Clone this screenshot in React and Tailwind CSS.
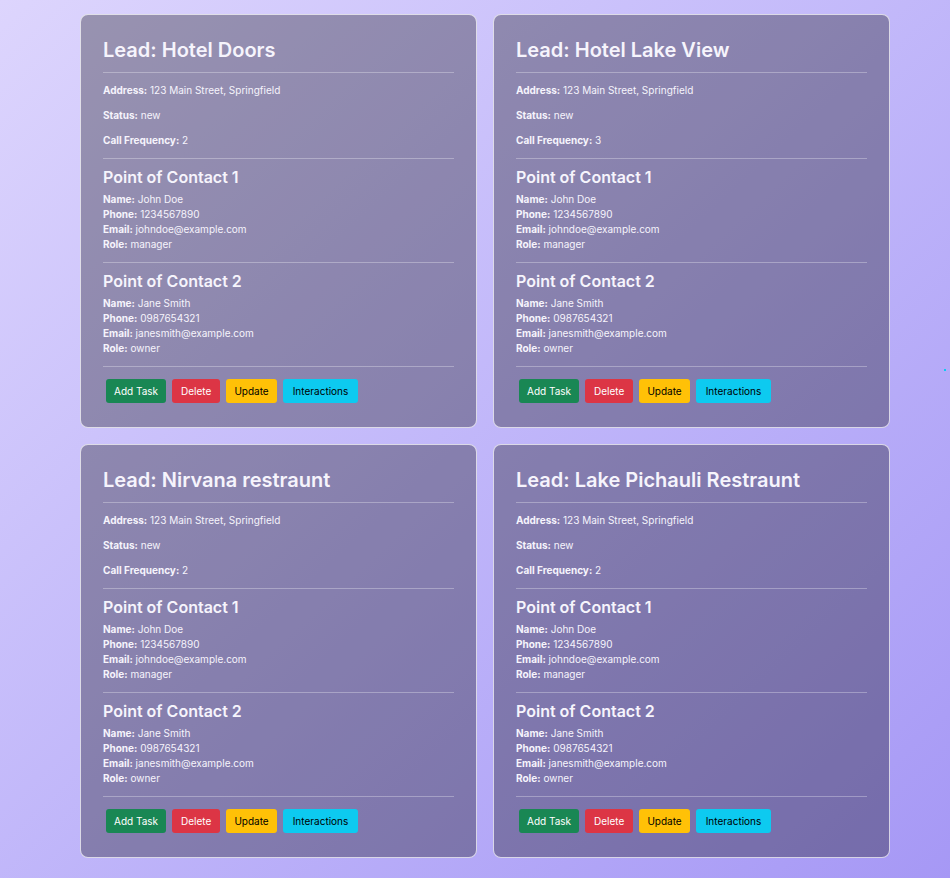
import React from "react";

const leads = [
  { name: "Hotel Doors", freq: 2 },
  { name: "Hotel Lake View", freq: 3 },
  { name: "Nirvana restraunt", freq: 2 },
  { name: "Lake Pichauli Restraunt", freq: 2 },
];

const contacts = [
  { name: "John Doe", phone: "1234567890", email: "johndoe@example.com", role: "manager" },
  { name: "Jane Smith", phone: "0987654321", email: "janesmith@example.com", role: "owner" },
];

const Field = ({ label, value, className = "" }) => (
  <p className={`text-[10px] leading-[15px] ${className}`}>
    <span className="font-bold">{label}:</span> {value}
  </p>
);

const LeadCard = ({ lead }) => (
  <div className="rounded-lg border border-white/70 bg-black/30 px-[22px] pt-[21px] pb-[24px] text-[#f6f4fc]">
    <h2 className="text-xl font-semibold leading-7">Lead: {lead.name}</h2>
    <hr className="mt-2 border-white/30" />
    <div className="pt-[10px]">
      <Field label="Address" value="123 Main Street, Springfield" className="mb-[10px]" />
      <Field label="Status" value="new" className="mb-[10px]" />
      <Field label="Call Frequency" value={lead.freq} className="mb-[10px]" />
    </div>
    {contacts.map((c, i) => (
      <div key={i}>
        <hr className="border-white/30" />
        <h3 className="mt-[6px] mb-[3px] text-base font-semibold leading-6">Point of Contact {i + 1}</h3>
        <Field label="Name" value={c.name} />
        <Field label="Phone" value={c.phone} />
        <Field label="Email" value={c.email} />
        <Field label="Role" value={c.role} className="mb-[10px]" />
      </div>
    ))}
    <hr className="border-white/30" />
    <div className="mt-[12px] flex gap-[6px] px-[3px] text-[10px]">
      <button className="h-6 rounded-[3px] bg-[#198754] px-2 text-white">Add Task</button>
      <button className="h-6 rounded-[3px] bg-[#dc3545] px-[9px] text-white">Delete</button>
      <button className="h-6 rounded-[3px] bg-[#ffc107] px-2 text-black">Update</button>
      <button className="h-6 rounded-[3px] bg-[#0dcaf0] px-[10px] text-black">Interactions</button>
    </div>
  </div>
);

export default function App() {
  return (
    <div
      className="relative min-h-[878px] bg-gradient-to-br from-[#ddd5fd] to-[#a698f5] pl-[80px] pt-[14px] pb-5"
      style={{ fontFamily: "Inter, 'Noto Sans', sans-serif" }}
    >
      <div className="grid grid-cols-[397px_397px] gap-4">
        {leads.map((l) => (
          <LeadCard key={l.name} lead={l} />
        ))}
      </div>
      <span className="absolute left-[944px] top-[369px] h-[2px] w-[2px] bg-[#0dcaf0]" />
    </div>
  );
}
